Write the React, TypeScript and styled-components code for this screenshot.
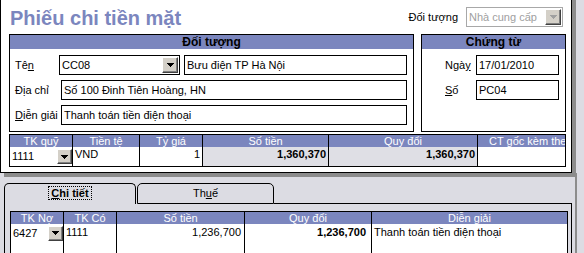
import styled, { createGlobalStyle } from "styled-components";

const BLUE = "#7b86be";
const BG = "#dcdce3";

const GlobalStyle = createGlobalStyle`
  html, body {
    margin: 0;
    padding: 0;
  }
  body {
    background: ${BG};
    font-family: "Liberation Sans", Arial, sans-serif;
    font-size: 11px;
    color: #000;
    overflow: hidden;
  }
`;

const Page = styled.div`
  width: 584px;
  height: 253px;
  overflow: hidden;
`;

//=================== TOP PANEL ===================
const MainPanel = styled.div`
  box-sizing: border-box;
  width: 572px;
  height: 179px;
  margin-top: -6px;
  padding: 0 5px 0 8px;
  background: #fff;
  border: 1px solid #000;
  box-shadow: 4px 4px 0 #8c8c8c;
  display: flex;
  flex-direction: column;
`;

const TopRow = styled.div`
  height: 39px;
  display: flex;
  align-items: flex-start;
`;

const Title = styled.h1`
  flex: 1;
  margin: 13px 0 0 1px;
  font-size: 20px;
  line-height: 20px;
  font-weight: bold;
  color: ${BLUE};
`;

const TypeLabel = styled.span`
  margin-top: 12px;
  line-height: 20px;
  margin-right: 8px;
`;

const DisabledSelect = styled.div`
  box-sizing: border-box;
  width: 97px;
  height: 20px;
  margin: 12px 3px 0 0;
  border: 1px solid #a8a8a8;
  background: #fff;
  color: #a0a0a0;
  display: flex;
  align-items: center;
  justify-content: space-between;
  padding: 0 1px 0 2px;
`;

const GroupRow = styled.div`
  display: flex;
  gap: 7px;
  height: 98px;
`;

const GroupBox = styled.div<{ $w: number }>`
  box-sizing: border-box;
  width: ${(p) => p.$w}px;
  height: 98px;
  border: 1px solid #000;
  display: flex;
  flex-direction: column;
`;

const GroupHead = styled.div`
  height: 14px;
  line-height: 14px;
  background: ${BLUE};
  text-align: center;
  font-weight: bold;
  font-size: 12px;
`;

const GroupBody = styled.div<{ $pl: number }>`
  display: flex;
  flex-direction: column;
  gap: 5px;
  padding: 6px 6px 0 ${(p) => p.$pl}px;
`;

const FieldRow = styled.div`
  display: flex;
  align-items: center;
  height: 20px;
`;

const Label = styled.span<{ $w: number }>`
  width: ${(p) => p.$w}px;
  flex-shrink: 0;
  white-space: nowrap;
`;

const TextBox = styled.div<{ $w?: number; $ml?: number }>`
  box-sizing: border-box;
  height: 20px;
  ${(p) => (p.$w ? `width: ${p.$w}px;` : "flex: 1;")}
  margin-left: ${(p) => p.$ml ?? 0}px;
  border: 1px solid #000;
  padding: 0 2px;
  line-height: 18px;
  white-space: nowrap;
  overflow: hidden;
  display: flex;
  align-items: center;
  justify-content: space-between;
`;

const DropBtn = styled.span<{ $size: number; $off?: boolean }>`
  box-sizing: border-box;
  flex-shrink: 0;
  width: ${(p) => p.$size}px;
  height: ${(p) => p.$size}px;
  background: #d4d0c8;
  border: 1px solid;
  border-color: #fff #404040 #404040 #fff;
  box-shadow: inset -1px -1px 0 #808080;
  display: flex;
  align-items: center;
  justify-content: center;
  color: ${(p) => (p.$off ? "#a0a0a0" : "#000")};
`;

const Arrow = () => (
  <svg width="7" height="4" viewBox="0 0 7 4" shapeRendering="crispEdges">
    <path
      d="M0 0h7v1h-1v1h-1v1h-1v1h-1v-1h-1v-1h-1v-1h-1z"
      fill="currentColor"
    />
  </svg>
);

//=================== GRIDS ===================
const Grid = styled.div<{ $cols: string; $rows: string; $h?: number }>`
  box-sizing: border-box;
  display: grid;
  grid-template-columns: ${(p) => p.$cols};
  grid-template-rows: ${(p) => p.$rows};
  ${(p) => (p.$h ? `height: ${p.$h}px;` : "")}
  border: 1px solid #000;
  background: #fff;
`;

const HeadCell = styled.div<{ $last?: boolean; $left?: number }>`
  background: ${BLUE};
  color: #fff;
  line-height: 12px;
  text-align: ${(p) => (p.$left ? "left" : "center")};
  padding-left: ${(p) => p.$left ?? 0}px;
  white-space: nowrap;
  overflow: hidden;
  border-right: ${(p) => (p.$last ? "none" : "1px solid #000")};
`;

const Cell = styled.div<{
  $last?: boolean;
  $align?: "left" | "right";
  $bold?: boolean;
  $gray?: boolean;
  $pr?: number;
  $lh: number;
}>`
  display: flex;
  align-items: flex-start;
  justify-content: ${(p) => (p.$align === "right" ? "flex-end" : "space-between")};
  padding: 0 ${(p) => p.$pr ?? 2}px 0 2px;
  line-height: ${(p) => p.$lh}px;
  font-weight: ${(p) => (p.$bold ? "bold" : "normal")};
  background: ${(p) => (p.$gray ? "#dfdfe5" : "#fff")};
  white-space: nowrap;
  overflow: hidden;
  border-right: ${(p) => (p.$last ? "none" : "1px solid #000")};
`;

const BtnCell = styled(Cell)`
  padding-right: 0;
  align-items: center;
`;

const Table1 = styled(Grid)`
  margin-top: 2px;
`;

//=================== TABS ===================
const Bottom = styled.div`
  box-sizing: border-box;
  width: 577px;
  height: 80px;
  padding: 10px 3px 0 4px;
  border-right: 2px solid #8c8c8c;
  display: flex;
  flex-direction: column;
`;

const TabStrip = styled.div`
  display: flex;
  height: 21px;
`;

const Tab = styled.div<{ $w: number; $active?: boolean; $ml?: number }>`
  box-sizing: border-box;
  width: ${(p) => p.$w}px;
  height: 21px;
  margin-left: ${(p) => p.$ml ?? 0}px;
  border: 1px solid #000;
  border-bottom: ${(p) => (p.$active ? "none" : "1px solid #000")};
  border-radius: 5px 5px 0 0;
  background: ${BG};
  text-align: center;
  line-height: 18px;
  font-weight: ${(p) => (p.$active ? "bold" : "normal")};
`;

const Focus = styled.span`
  outline: 1px dotted #000;
  outline-offset: 0;
  padding: 0 2px;
`;

const StripFill = styled.div`
  flex: 1;
  border-bottom: 1px solid #000;
`;

const TabPage = styled.div`
  flex: 1;
  border-left: 1px solid #000;
  border-right: 1px solid #000;
  padding: 7px 3px 0 5px;
`;

const cols1 = [
  { w: 63, h: "TK quỹ" },
  { w: 67, h: "Tiền tệ" },
  { w: 63, h: "Tỷ giá" },
  { w: 126, h: "Số tiền" },
  { w: 149, h: "Quy đổi" },
  { w: 87, h: "CT gốc kèm theo" },
];

const cols2 = [
  { w: 53, h: "TK Nợ" },
  { w: 53, h: "TK Có" },
  { w: 128, h: "Số tiền" },
  { w: 127, h: "Quy đổi" },
  { w: 195, h: "Diễn giải" },
];

function App() {
  return (
    <Page>
      <GlobalStyle />
      <MainPanel>
        <TopRow>
          <Title>Phiếu chi tiền mặt</Title>
          <TypeLabel>Đối tượng</TypeLabel>
          <DisabledSelect>
            <span>Nhà cung cấp</span>
            <DropBtn $size={16} $off>
              <Arrow />
            </DropBtn>
          </DisabledSelect>
        </TopRow>

        <GroupRow>
          <GroupBox $w={405}>
            <GroupHead>Đối tượng</GroupHead>
            <GroupBody $pl={5}>
              <FieldRow>
                <Label $w={46}>
                  Tê<u>n</u>
                </Label>
                <TextBox $w={121} $ml={-2} style={{ paddingRight: 1 }}>
                  <span>CC08</span>
                  <DropBtn $size={16}>
                    <Arrow />
                  </DropBtn>
                </TextBox>
                <TextBox $ml={4}>Bưu điện TP Hà Nội</TextBox>
              </FieldRow>
              <FieldRow>
                <Label $w={46}>Địa chỉ</Label>
                <TextBox>Số 100 Đinh Tiên Hoàng, HN</TextBox>
              </FieldRow>
              <FieldRow>
                <Label $w={46}>
                  <u>D</u>iễn giải
                </Label>
                <TextBox>Thanh toán tiền điện thoại</TextBox>
              </FieldRow>
            </GroupBody>
          </GroupBox>

          <GroupBox $w={145}>
            <GroupHead>Chứng từ</GroupHead>
            <GroupBody $pl={23}>
              <FieldRow>
                <Label $w={31}>
                  Ngà<u>y</u>
                </Label>
                <TextBox $w={85}>17/01/2010</TextBox>
              </FieldRow>
              <FieldRow>
                <Label $w={31}>
                  <u>S</u>ố
                </Label>
                <TextBox $w={85}>PC04</TextBox>
              </FieldRow>
            </GroupBody>
          </GroupBox>
        </GroupRow>

        <Table1 $cols={cols1.map((c) => `${c.w}px`).join(" ")} $rows="12px 19px">
          {cols1.map((c, i) => (
            <HeadCell key={c.h} $last={i === cols1.length - 1} $left={i === 5 ? 11 : 0}>
              {c.h}
            </HeadCell>
          ))}
          <BtnCell $lh={15}>
            <span>1111</span>
            <DropBtn $size={15}>
              <Arrow />
            </DropBtn>
          </BtnCell>
          <Cell $lh={15}>VND</Cell>
          <Cell $lh={15} $align="right">
            1
          </Cell>
          <Cell $lh={15} $align="right" $bold $gray>
            1,360,370
          </Cell>
          <Cell $lh={15} $align="right" $bold $gray>
            1,360,370
          </Cell>
          <Cell $lh={15} $last></Cell>
        </Table1>
      </MainPanel>

      <Bottom>
        <TabStrip>
          <Tab $w={132} $active>
            <Focus>
              <u>C</u>hi tiết
            </Focus>
          </Tab>
          <Tab $w={137} $ml={1}>
            Th<u>u</u>ế
          </Tab>
          <StripFill />
        </TabStrip>
        <TabPage>
          <Grid
            $cols={cols2.map((c) => `${c.w}px`).join(" ")}
            $rows="12px 18px 1fr"
            $h={60}
          >
            {cols2.map((c, i) => (
              <HeadCell key={c.h} $last={i === cols2.length - 1}>
                {c.h}
              </HeadCell>
            ))}
            <BtnCell $lh={17}>
              <span>6427</span>
              <DropBtn $size={15}>
                <Arrow />
              </DropBtn>
            </BtnCell>
            <Cell $lh={17}>1111</Cell>
            <Cell $lh={17} $align="right" $pr={3}>
              1,236,700
            </Cell>
            <Cell $lh={17} $align="right" $bold $pr={5}>
              1,236,700
            </Cell>
            <Cell $lh={17} $last>
              Thanh toán tiền điện thoại
            </Cell>
            {cols2.map((c, i) => (
              <Cell key={"f" + c.h} $lh={17} $last={i === cols2.length - 1} />
            ))}
          </Grid>
        </TabPage>
      </Bottom>
    </Page>
  );
}

export default App;
